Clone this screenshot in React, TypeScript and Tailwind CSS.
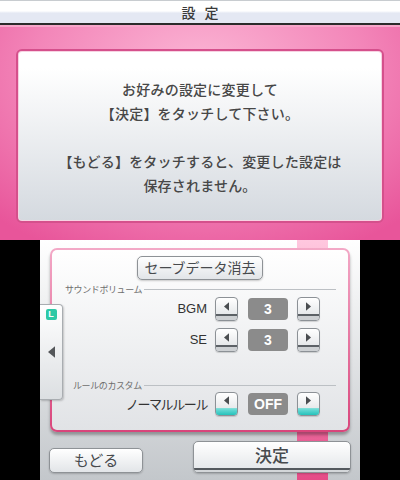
const jp = "font-['Noto_Sans_CJK_JP','Noto_Sans',sans-serif]"

const Tri = ({ dir, className }: { dir: "left" | "right"; className?: string }) => (
  <svg viewBox="0 0 6 10" className={className}>
    <polygon points={dir === "left" ? "6,0 0,5 6,10" : "0,0 6,5 0,10"} fill="currentColor" />
  </svg>
)

// small stepper key with a dark lip along the bottom
const ArrowKey = ({ dir, teal = false }: { dir: "left" | "right"; teal?: boolean }) => (
  <div className="w-[23px] h-[24px] rounded-[4px] border border-[#8c9196] bg-[linear-gradient(#ffffff,#dde0e3)] flex flex-col overflow-hidden shadow-[0_1px_1px_rgba(0,0,0,0.15)]">
    <div className="flex-1 flex items-center justify-center">
      <Tri dir={dir} className="w-[5px] h-[9px] text-[#4a4d50]" />
    </div>
    {teal ? (
      <div className="h-[7px] border-t border-[#7fded8] bg-[linear-gradient(#6fdcd6,#25c2bb)]" />
    ) : (
      <div className="h-[6px] border-t-2 border-[#5c6166] bg-[#cdd0d3]" />
    )}
  </div>
)

const ValueBox = ({ children }: { children: React.ReactNode }) => (
  <div className="w-[40px] h-[22px] rounded-[4px] bg-[#8b8b8b] flex items-center justify-center text-white font-bold text-[14px] font-['Liberation_Sans',sans-serif]">
    {children}
  </div>
)

const Stepper = ({ label, value, teal = false, labelClass = "" }: { label: string; value: string; teal?: boolean; labelClass?: string }) => (
  <div className="flex items-center h-[24px]">
    <div className={`w-[155px] text-right text-[#333] ${labelClass}`}>{label}</div>
    <div className="ml-[8px]"><ArrowKey dir="left" teal={teal} /></div>
    <div className="ml-[10px]"><ValueBox>{value}</ValueBox></div>
    <div className="ml-[9px]"><ArrowKey dir="right" teal={teal} /></div>
  </div>
)

const SectionTitle = ({ title, indent }: { title: string; indent: string }) => (
  <div className={`flex items-center h-[12px] pr-[12px] ${indent}`}>
    <span className={`text-[9px] leading-none tracking-[-0.4px] text-[#6e6e6e] ${jp}`}>{title}</span>
    <div className="flex-1 h-px bg-[#bcc0c4] ml-[2px]" />
  </div>
)

// large key used for the bottom row
const BigKey = ({ children, className, text }: { children: React.ReactNode; className: string; text: string }) => (
  <div className={`rounded-[5px] border border-[#8e9296] bg-[linear-gradient(#ffffff,#e2e5e8)] flex flex-col overflow-hidden shadow-[0_1px_2px_rgba(0,0,0,0.2)] ${className}`}>
    <div className={`flex-1 flex items-center justify-center text-[#474a4d] ${jp} ${text}`}>{children}</div>
    <div className="h-[6px] border-t-2 border-[#54595e] bg-[#d3d6d9]" />
  </div>
)

export default function App() {
  return (
    <div className="w-[400px] h-[480px] bg-black flex flex-col">
      {/* upper screen */}
      <div className="h-[240px] flex flex-col">
        <div className="h-[25px] border-b-2 border-[#2b2b2b] bg-[linear-gradient(#ffffff_45%,#e4e8f3_55%)] flex items-center justify-center gap-[9px] border-t border-t-[#c8ccd0]">
          <span className={`text-[14px] font-medium text-[#3a3a3a] ${jp}`}>設</span>
          <span className={`text-[14px] font-medium text-[#3a3a3a] ${jp}`}>定</span>
        </div>
        <div className="flex-1 px-[16px] pt-[22px] pb-[17px] border-t-2 border-[#f7a6ca] bg-[radial-gradient(ellipse_75%_95%_at_50%_20%,#fbb6d5_0%,#f386b9_55%,#e8559a_100%)]">
          <div className="h-full rounded-[6px] border-2 border-[#d5508c] shadow-[inset_0_0_0_1px_#f7d2e2] bg-[linear-gradient(#ffffff_10%,#d4d9df)] flex flex-col items-center justify-center pt-[2px]">
            <div className={`text-[14px] leading-[24px] text-[#474747] font-medium text-center tracking-[0.2px] ${jp}`}>
              <p>お好みの設定に変更して</p>
              <p>【決定】をタッチして下さい。</p>
              <p>&nbsp;</p>
              <p>【もどる】をタッチすると、変更した設定は</p>
              <p>保存されません。</p>
            </div>
          </div>
        </div>
      </div>

      {/* lower screen */}
      <div className="h-[240px] w-[320px] mx-auto relative overflow-hidden [background:linear-gradient(#ffc8df,#e54c87)_257px_0/31px_100%_no-repeat,linear-gradient(#ffffff,#c3c7cb)]">
        <div className="ml-[10px] mt-[8px] w-[300px] h-[184px] rounded-[7px] p-[2px] bg-[linear-gradient(#f3a9c7,#d9457b)] shadow-[0_3px_3px_rgba(0,0,0,0.3)]">
          <div className="h-full rounded-[5px] bg-[linear-gradient(#ffffff,#e1e3e6)] flex flex-col">
            <div className="flex justify-center mt-[6px]">
              <BigKey className="w-[126px] h-[24px]" text="text-[14px] text-[#333] pb-[1px]">セーブデータ消去</BigKey>
            </div>
            <div className="mt-[3px]">
              <SectionTitle title="サウンドボリューム" indent="pl-[13px]" />
            </div>
            <div className="mt-[2px]">
              <Stepper label="BGM" value="3" labelClass="text-[13px] font-['Liberation_Sans',sans-serif]" />
            </div>
            <div className="mt-[7px]">
              <Stepper label="SE" value="3" labelClass="text-[13px] font-['Liberation_Sans',sans-serif]" />
            </div>
            <div className="mt-[27px]">
              <SectionTitle title="ルールのカスタム" indent="pl-[21px]" />
            </div>
            <div className="mt-[1px]">
              <Stepper label="ノーマルルール" value="OFF" teal labelClass={`text-[13px] tracking-[-1.4px] ${jp}`} />
            </div>
          </div>
        </div>

        {/* bottom keys */}
        <div className="flex items-start mt-[9px]">
          <BigKey className="ml-[9px] mt-[7px] w-[94px] h-[25px]" text="text-[15px]">もどる</BigKey>
          <BigKey className="ml-[50px] w-[158px] h-[32px]" text="text-[17px] font-medium">決定</BigKey>
        </div>

        {/* L-button side tab over the panel */}
        <div className="absolute left-0 top-[64px] w-[23px] h-[96px] rounded-r-[4px] border border-l-0 border-[#a9adb1] bg-[linear-gradient(#ffffff,#dcdfe2)] shadow-[1px_1px_2px_rgba(0,0,0,0.2)] flex flex-col items-center">
          <div className="mt-[4px] w-[11px] h-[11px] rounded-[2px] bg-[#2fc9a6] flex items-center justify-center text-white text-[9px] font-bold leading-none font-['Liberation_Sans',sans-serif]">L</div>
          <Tri dir="left" className="mt-[26px] w-[7px] h-[12px] text-[#54575a]" />
        </div>
      </div>
    </div>
  )
}
